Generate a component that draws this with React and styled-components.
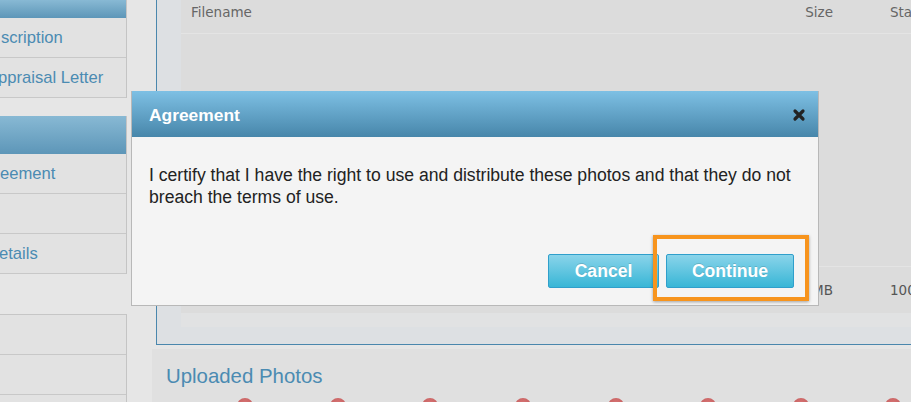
import React from "react"
import styled, { createGlobalStyle } from "styled-components"

const GlobalStyle = createGlobalStyle`
  body {
    margin: 0;
    background: #e6e6e6;
    font-family: "Liberation Sans", Arial, sans-serif;
  }
`

const Page = styled.div`
  position: relative;
  width: 911px;
  height: 402px;
  overflow: hidden;
  display: flex;
  background: #e6e6e6;
`

const Sidebar = styled.nav`
  width: 127px;
  flex-shrink: 0;
  display: flex;
  flex-direction: column;

  & > * {
    flex-shrink: 0;
  }
`

const Group = styled.div`
  background: #e2e2e2;
  border-right: 1px solid #c4c4c4;
  border-top: ${({ $top }) => ($top ? "1px solid #c6c6c6" : "none")};
`

const GroupHeader = styled.div`
  height: ${({ $h }) => $h}px;
  background: linear-gradient(#88b9d4, #5d96b8);
`

const Item = styled.div`
  height: 39px;
  line-height: 39px;
  border-bottom: 1px solid #c8c8c8;
  color: #4b8bb2;
  font-size: 16.6px;
  white-space: nowrap;
  overflow: hidden;
  text-indent: ${({ $indent }) => $indent || 0}px;
`

const Gap = styled.div`
  height: ${({ $h }) => $h}px;
`

const Main = styled.main`
  flex: 1;
  display: flex;
  flex-direction: column;
  padding-left: 29px;
`

const Panel = styled.section`
  width: 800px;
  flex-shrink: 0;
  background: #dde0e3;
  border-left: 1px solid #4a87ad;
  border-bottom: 1px solid #4a87ad;
  padding: 0 0 17px 24px;
`

const Table = styled.div`
  height: 327px;
  display: flex;
  flex-direction: column;
  background: #dcdcdc;
  font-family: "DejaVu Sans", Verdana, sans-serif;
  font-size: 13.5px;
`

const Row = styled.div`
  display: grid;
  grid-template-columns: 505px 80px 120px;
  column-gap: 57px;
  padding-left: 10px;
  height: ${({ $h }) => $h}px;
  color: ${({ $head }) => ($head ? "#666" : "#555")};
  border-bottom: ${({ $head }) => ($head ? "1px solid #e4e4e4" : "none")};
  border-top: ${({ $head }) => ($head ? "none" : "1px solid #e4e4e4")};
  align-items: ${({ $head }) => ($head ? "start" : "center")};
  padding-top: ${({ $head }) => ($head ? "4px" : "0")};
  box-sizing: ${({ $head }) => ($head ? "content-box" : "border-box")};
`

const Cell = styled.span`
  text-align: ${({ $right }) => ($right ? "right" : "left")};
  white-space: nowrap;
  line-height: 16px;
`

const TableBody = styled.div`
  flex: 1;
`

const TableFoot = styled.div`
  height: 14px;
  background: #e1e2e3;
`

const Uploaded = styled.section`
  width: 800px;
  flex: 1;
  margin: 4px 0 0 -4px;
  padding: 15px 0 0 14px;
  background: #e0e0e0;
`

const SectionTitle = styled.h2`
  margin: 0;
  font-size: 20.4px;
  line-height: 24px;
  font-weight: normal;
  color: #4b8bb2;
`

const Photos = styled.div`
  display: grid;
  grid-template-columns: repeat(8, 92.6px);
  margin-top: 10px;
  padding-left: 33px;
`

const DeleteDot = styled.span`
  justify-self: center;
  width: 16px;
  height: 16px;
  border-radius: 50%;
  background: radial-gradient(circle at 50% 35%, #d77474, #bd5656);
`

const Dialog = styled.div`
  position: absolute;
  left: 131px;
  top: 91px;
  width: 688px;
  box-sizing: border-box;
  border: 1px solid #b8b8b8;
  border-top: none;
  background: #f4f4f4;
  font-size: 17.6px;
`

const DialogHeader = styled.div`
  height: 46px;
  box-sizing: border-box;
  display: flex;
  align-items: center;
  justify-content: space-between;
  padding: 2px 12px 0 17px;
  background: linear-gradient(#7ec0e4, #4786aa);
`

const DialogTitle = styled.h3`
  margin: 0;
  color: #fff;
  font-size: 17.4px;
  font-weight: bold;
`

const Close = styled.button`
  display: flex;
  border: 0;
  padding: 0;
  background: none;
`

const DialogBody = styled.p`
  margin: 0;
  padding: 27px 8px 0 17px;
  line-height: 22px;
  color: #222;
`

const DialogFoot = styled.div`
  display: flex;
  justify-content: flex-end;
  gap: 7px;
  padding: 46px 24px 17px 0;
`

const Button = styled.button`
  width: ${({ $w }) => $w}px;
  height: 34px;
  border: 1px solid #2f9fcb;
  border-radius: 2px;
  background: linear-gradient(#8ad4ea, #38b6d6);
  color: #fff;
  font-family: "Liberation Sans", Arial, sans-serif;
  font-size: 17.6px;
  font-weight: bold;
  text-shadow: 0 -1px 0 rgba(0, 0, 0, 0.15);
`

const Highlighted = styled.span`
  position: relative;
  display: flex;
`

const HighlightBox = styled.span`
  position: absolute;
  left: -13px;
  right: -15px;
  top: -19px;
  bottom: -13px;
  border: 4px solid #f7941d;
  box-shadow: 0 1px 3px rgba(0, 0, 0, 0.35);
  pointer-events: none;
`

const App = () => (
  <Page>
    <GlobalStyle />
    <Sidebar>
      <Group>
        <GroupHeader $h={18} />
        <Item $indent={1}>scription</Item>
        <Item $indent={-2}>ppraisal Letter</Item>
      </Group>
      <Gap $h={18} />
      <Group>
        <GroupHeader $h={38} />
        <Item>eement</Item>
        <Item />
        <Item $indent={-1}>etails</Item>
      </Group>
      <Gap $h={40} />
      <Group $top>
        <Item />
        <Item />
        <Item />
      </Group>
    </Sidebar>
    <Main>
      <Panel>
        <Table>
          <Row $head $h={29}>
            <Cell>Filename</Cell>
            <Cell $right>Size</Cell>
            <Cell>Status</Cell>
          </Row>
          <TableBody />
          <Row $h={47}>
            <Cell>photo_01.jpg</Cell>
            <Cell $right>1.5 MB</Cell>
            <Cell>100%</Cell>
          </Row>
          <TableFoot />
        </Table>
      </Panel>
      <Uploaded>
        <SectionTitle>Uploaded Photos</SectionTitle>
        <Photos>
          {Array.from({ length: 8 }).map((_, i) => (
            <DeleteDot key={i} />
          ))}
        </Photos>
      </Uploaded>
    </Main>
    <Dialog>
      <DialogHeader>
        <DialogTitle>Agreement</DialogTitle>
        <Close aria-label="Close">
          <svg width="14" height="14" viewBox="0 0 14 14">
            <path
              d="M3 3 L11 11 M11 3 L3 11"
              stroke="#222"
              strokeWidth="3.2"
              strokeLinecap="round"
            />
          </svg>
        </Close>
      </DialogHeader>
      <DialogBody>
        I certify that I have the right to use and distribute these photos and
        that they do not breach the terms of use.
      </DialogBody>
      <DialogFoot>
        <Button $w={111}>Cancel</Button>
        <Highlighted>
          <Button $w={128}>Continue</Button>
          <HighlightBox />
        </Highlighted>
      </DialogFoot>
    </Dialog>
  </Page>
)

export default App
